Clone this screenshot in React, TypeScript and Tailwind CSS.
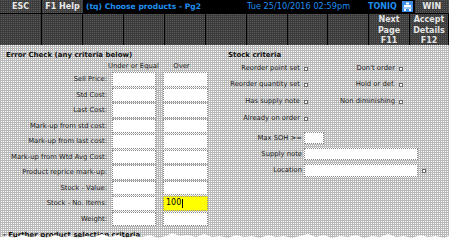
import React from 'react';

const dotLight =
  'bg-[#b8b8b8] bg-[image:conic-gradient(#ffffff_0_25%,transparent_0)] bg-[size:2px_2px]';
const dotDark =
  'bg-[#3c3c3c] bg-[image:conic-gradient(#5a5a5a_0_25%,transparent_0)] bg-[size:2px_2px]';

const rows = [
  'Sell Price:',
  'Std Cost:',
  'Last Cost:',
  'Mark-up from std cost:',
  'Mark-up from last cost:',
  'Mark-up from Wtd Avg Cost:',
  'Product reprice mark-up:',
  'Stock - Value:',
  'Stock - No. Items:',
  'Weight:',
];

function Box({ className = '', children }: { className?: string; children?: React.ReactNode }) {
  return (
    <div className={`h-[14.5px] border border-dotted border-[#8a8a8a] bg-white ${className}`}>{children}</div>
  );
}

function Check() {
  return <span className="inline-block shrink-0 w-[4px] h-[4px] border border-[#6a6a6a] bg-white ml-[4px]" />;
}

function ToolCell({ lines }: { lines?: string[] }) {
  return (
    <div className={`${dotDark} border-r border-black flex flex-col items-center justify-start pt-px leading-[10.5px] text-[8px] font-bold text-[#e4e4e4]`}>
      {lines?.map((l) => (
        <span key={l}>{l}</span>
      ))}
    </div>
  );
}

export default function App() {
  return (
    <div className="relative w-[449px] h-[240px] overflow-hidden flex flex-col bg-white" style={{ fontFamily: '"DejaVu Sans", Verdana, sans-serif' }}>
      {/* Top bar */}
      <div className="flex h-[13px] shrink-0 bg-black text-[8px] font-bold leading-[13px]">
        <div className={`${dotDark} w-[42px] text-center text-[#e8e8e8] border-r border-black`}>ESC</div>
        <div className={`${dotDark} w-[41px] text-center text-[#e8e8e8]`}>F1 Help</div>
        <div className="pl-[3px] w-[164px] text-[7.6px] text-[#1e8ff0] whitespace-nowrap">(tq) Choose products - Pg2</div>
        <div className="w-[121px] font-normal text-[8.2px] text-[#1e8ff0]">Tue 25/10/2016 02:59pm</div>
        <div className="text-[#1e8ff0]">TONIQ</div>
        <div className="ml-[5px] mt-[1px] w-[11px] h-[11px] bg-[#3a8ee8] flex items-center justify-center">
          <svg width="9" height="9" viewBox="0 0 9 9">
            <rect x="3" y="0.5" width="3" height="2" fill="#fff" />
            <rect x="1" y="3" width="7" height="2" fill="#fff" />
            <rect x="0.5" y="5.5" width="8" height="1" fill="#fff" />
            <rect x="1" y="7" width="2" height="2" fill="#fff" />
            <rect x="6" y="7" width="2" height="2" fill="#fff" />
          </svg>
        </div>
        <div className={`${dotDark} flex-1 ml-[2px] text-center text-[#e8e8e8]`}>WIN</div>
      </div>

      {/* Toolbar */}
      <div className="grid grid-cols-[42px_41px_41px_41px_41px_41px_41px_40px_41px_41px_39px] h-[32px] shrink-0 border-t border-black overflow-hidden">
        <ToolCell />
        <ToolCell />
        <ToolCell />
        <ToolCell />
        <ToolCell />
        <ToolCell />
        <ToolCell />
        <ToolCell />
        <ToolCell />
        <ToolCell lines={['Next', 'Page', 'F11']} />
        <ToolCell lines={['Accept', 'Details', 'F12']} />
      </div>

      {/* Content */}
      <div className={`${dotLight} flex flex-1 text-[6.8px] text-[#222]`}>
        <div className="w-[222px] pl-[6px] pt-[6px]">
          <div className="font-bold text-[7px] leading-[9px] text-[#111]">Error Check (any criteria below)</div>
          <div className="flex h-[10px] leading-[10px] mt-[1px]">
            <div className="w-[102px]" />
            <div className="w-[44px] text-center whitespace-nowrap">Under or Equal</div>
            <div className="w-[7px]" />
            <div className="w-[45px] text-center">Over</div>
          </div>
          <div className="flex flex-col gap-px mt-[1px]">
            {rows.map((r) => (
              <div key={r} className="flex items-center h-[14.5px]">
                <div className="w-[102px] text-right pr-[1px] whitespace-nowrap">{r}</div>
                <Box className="w-[44px] ml-[4px]" />
                <div className="w-[7px]" />
                {r === 'Stock - No. Items:' ? (
                  <Box className="w-[45px] !bg-[#ffff00] flex items-center pl-[2px] text-[8px] text-black">
                    100<span className="inline-block w-px h-[9px] bg-black ml-px" />
                  </Box>
                ) : (
                  <Box className="w-[45px]" />
                )}
              </div>
            ))}
          </div>
          <div className="mt-[5px] font-bold text-[7px] leading-[9px] text-[#111] -ml-[3px] whitespace-nowrap">- Further product selection criteria</div>
        </div>

        <div className="flex-1 pt-[6px] pl-[6px]">
          <div className="font-bold text-[7px] leading-[9px] text-[#111]">Stock criteria</div>
          <div className="grid grid-cols-[80px_95px] mt-[1px]">
            <div className="h-[15px] flex items-center justify-end whitespace-nowrap">Reorder point set<Check /></div>
            <div className="h-[15px] flex items-center justify-end whitespace-nowrap">Don't order<Check /></div>
            <div className="h-[17px] flex items-center justify-end whitespace-nowrap">Reorder quantity set<Check /></div>
            <div className="h-[17px] flex items-center justify-end whitespace-nowrap">Hold or def.<Check /></div>
            <div className="h-[17px] flex items-center justify-end whitespace-nowrap">Has supply note<Check /></div>
            <div className="h-[17px] flex items-center justify-end whitespace-nowrap">Non diminishing<Check /></div>
            <div className="h-[17px] flex items-center justify-end whitespace-nowrap">Already on order<Check /></div>
            <div />
          </div>
          <div className="flex flex-col gap-[4px] mt-[5px]">
            <div className="flex items-center">
              <div className="w-[76px] text-right pr-[2px]">Max SOH &gt;=</div>
              <div className="h-[12px] w-[20px] border border-dotted border-[#8a8a8a] bg-white" />
            </div>
            <div className="flex items-center">
              <div className="w-[76px] text-right pr-[2px]">Supply note</div>
              <div className="h-[12px] w-[114px] border border-dotted border-[#8a8a8a] bg-white" />
            </div>
            <div className="flex items-center">
              <div className="w-[76px] text-right pr-[2px]">Location</div>
              <div className="h-[13px] w-[114px] border border-dotted border-[#8a8a8a] bg-white" />
              <Check />
            </div>
          </div>
        </div>
      </div>

      {/* Torn paper edge */}
      <svg className="absolute left-0 bottom-0" width="449" height="9" viewBox="0 0 449 9" preserveAspectRatio="none">
        <polygon
          fill="#ffffff"
          points="0,6 8,5 14,7 22,4 30,6 38,5 46,7 55,4 62,6 70,5 78,7 86,5 94,6 102,3 110,6 118,4 126,7 134,5 142,6 150,4 158,7 166,5 172,2 180,5 188,4 196,6 204,3 212,6 220,5 228,7 236,4 244,6 252,5 260,7 268,4 276,6 284,5 292,7 300,5 308,3 316,6 324,4 332,7 340,5 348,6 356,4 364,7 372,5 380,6 388,3 396,6 404,5 412,7 420,4 428,6 436,5 444,7 449,5 449,9 0,9"
        />
      </svg>
    </div>
  );
}
